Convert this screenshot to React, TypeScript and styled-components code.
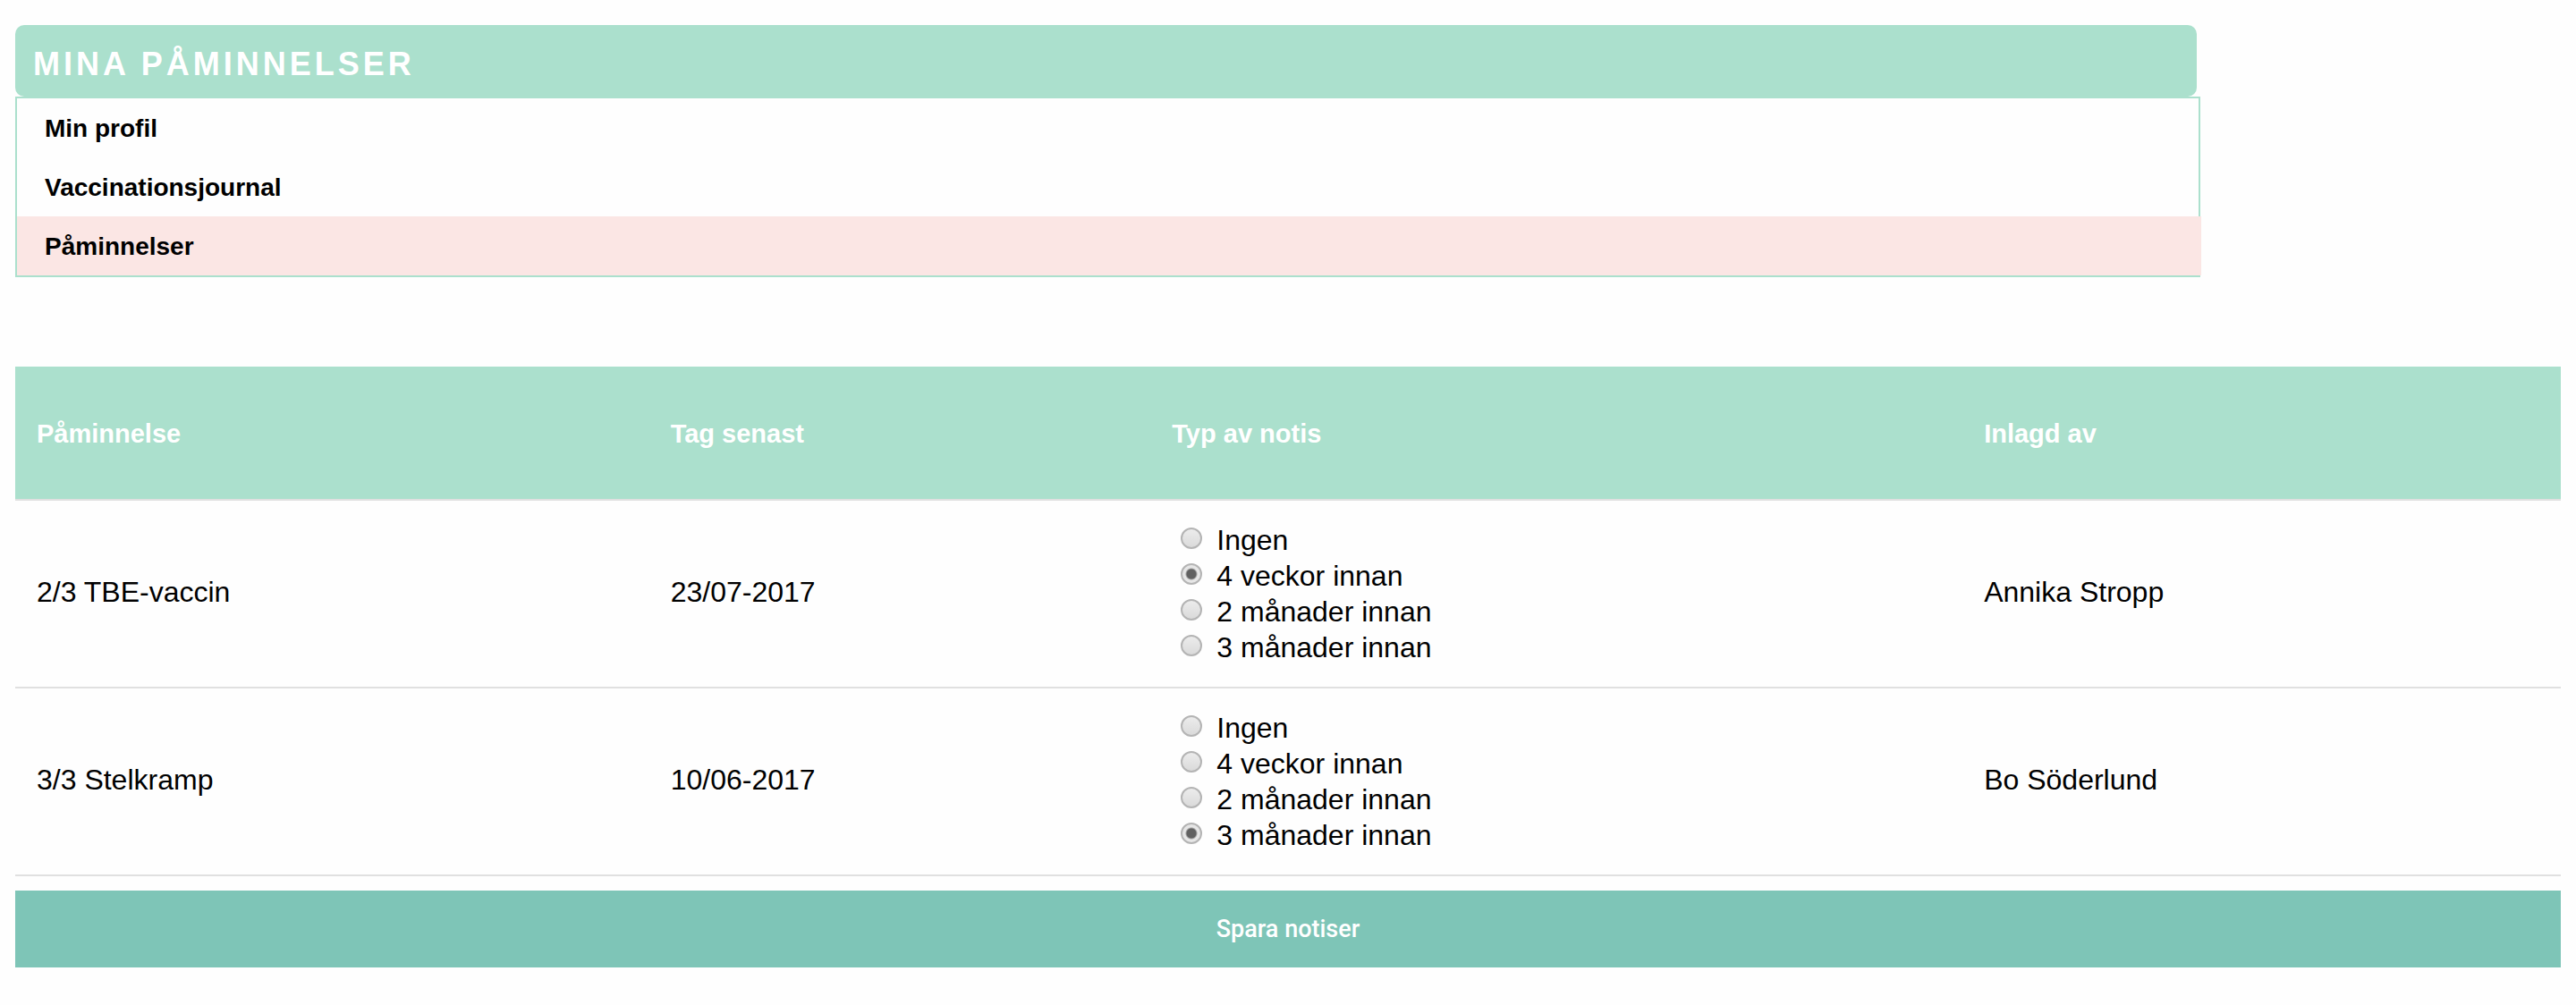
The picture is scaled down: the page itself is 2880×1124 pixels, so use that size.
import React, { useState } from 'react';
import styled, { createGlobalStyle } from 'styled-components';

const mint = '#abe0cd';
const teal = '#7ec5b7';
const blush = '#fbe6e4';
const line = '#e0e0e0';

const GlobalStyle = createGlobalStyle`
  *, *::before, *::after {
    box-sizing: border-box;
  }
  body {
    margin: 0;
    background: #fefefe;
    color: #000;
    font-family: "Liberation Sans", Arial, sans-serif;
    font-size: 32px;
    line-height: 40px;
  }
`;

const Page = styled.div`
  padding: 28px 17px 40px;
`;

const Intro = styled.header`
  display: grid;
  grid-template-columns: 6fr 1fr;
  margin-bottom: 100px;
`;

const Title = styled.h1`
  margin: 0;
  padding: 24px 20px 16px;
  border-radius: 10px;
  background: ${mint};
  color: #fff;
  font-size: 36px;
  font-weight: 700;
  letter-spacing: 4px;
  text-transform: uppercase;
`;

const Menu = styled.nav`
  grid-column: 1;
  box-sizing: content-box;
  width: 100%;
  border: 2px solid ${mint};
`;

const MenuLink = styled.a<{ $active?: boolean }>`
  display: block;
  margin-right: ${(p) => (p.$active ? '-3px' : '0')};
  padding: 14px 31px 12px;
  background: ${(p) => (p.$active ? blush : 'transparent')};
  color: #000;
  font-size: 28px;
  font-weight: 700;
  text-decoration: none;
`;

const Table = styled.table`
  width: 100%;
  border-collapse: separate;
  border-spacing: 0;
  table-layout: fixed;
`;

const Col = styled.col<{ $width: string }>`
  width: ${(p) => p.$width};
`;

const HeadCell = styled.th`
  padding: 55px 24px 53px;
  background: ${mint};
  color: #fff;
  font-size: 29px;
  font-weight: 700;
  text-align: left;
`;

const Row = styled.tr`
  &:last-child td {
    border-bottom: 2px solid ${line};
  }
`;

const Cell = styled.td`
  padding: 20px 24px 24px;
  border-top: 2px solid ${line};
  vertical-align: middle;
`;

const Choices = styled.fieldset`
  display: flex;
  flex-direction: column;
  margin: 0;
  padding: 4px 10px 0;
  border: 0;
`;

const Choice = styled.label`
  display: flex;
  align-items: center;
  gap: 16px;
`;

const Radio = styled.input`
  appearance: none;
  flex: none;
  width: 24px;
  height: 24px;
  margin: 0 0 4px;
  border: 2px solid #b4b4b4;
  border-radius: 50%;
  background: linear-gradient(#ececec, #dadada);

  &:checked {
    background: radial-gradient(circle, #616161 0 5px, #e6e6e6 7px);
  }
`;

const SaveButton = styled.button`
  display: block;
  width: 100%;
  margin-top: 16px;
  padding: 23px;
  border: 0;
  background: ${teal};
  color: #fff;
  font-family: Roboto, "Liberation Sans", sans-serif;
  font-size: 27px;
  font-weight: 500;
  line-height: 40px;
`;

const menu = ['Min profil', 'Vaccinationsjournal', 'Påminnelser'];
const options = ['Ingen', '4 veckor innan', '2 månader innan', '3 månader innan'];
const reminders = [
  { id: 'tbe', name: '2/3 TBE-vaccin', due: '23/07-2017', notice: 1, by: 'Annika Stropp' },
  { id: 'stelkramp', name: '3/3 Stelkramp', due: '10/06-2017', notice: 3, by: 'Bo Söderlund' },
];

function NoticeChoices({ id, label, initial }: { id: string; label: string; initial: number }) {
  const [selected, setSelected] = useState(initial);
  return (
    <Choices aria-label={label}>
      {options.map((option, i) => (
        <Choice key={option} htmlFor={`${id}-${i}`}>
          <Radio
            type="radio"
            id={`${id}-${i}`}
            name={id}
            checked={selected === i}
            onChange={() => setSelected(i)}
          />
          {option}
        </Choice>
      ))}
    </Choices>
  );
}

export default function App() {
  return (
    <Page>
      <GlobalStyle />
      <Intro>
        <Title>Mina påminnelser</Title>
        <Menu>
          {menu.map((item) => (
            <MenuLink key={item} href="#" $active={item === 'Påminnelser'}>
              {item}
            </MenuLink>
          ))}
        </Menu>
      </Intro>
      <form onSubmit={(e) => e.preventDefault()}>
        <Table>
          <colgroup>
            <Col $width="24.9%" />
            <Col $width="19.7%" />
            <Col $width="31.9%" />
            <Col $width="23.5%" />
          </colgroup>
          <thead>
            <tr>
              <HeadCell scope="col">Påminnelse</HeadCell>
              <HeadCell scope="col">Tag senast</HeadCell>
              <HeadCell scope="col">Typ av notis</HeadCell>
              <HeadCell scope="col">Inlagd av</HeadCell>
            </tr>
          </thead>
          <tbody>
            {reminders.map((r) => (
              <Row key={r.id}>
                <Cell>{r.name}</Cell>
                <Cell>{r.due}</Cell>
                <Cell>
                  <NoticeChoices id={r.id} label={r.name} initial={r.notice} />
                </Cell>
                <Cell>{r.by}</Cell>
              </Row>
            ))}
          </tbody>
        </Table>
        <SaveButton type="submit">Spara notiser</SaveButton>
      </form>
    </Page>
  );
}
